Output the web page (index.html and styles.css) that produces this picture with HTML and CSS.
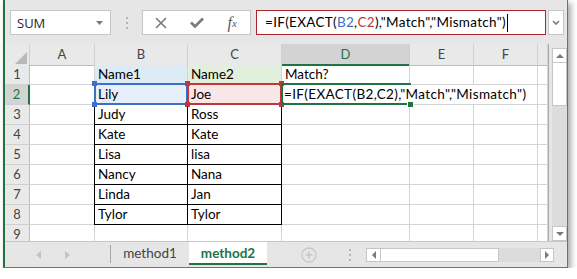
FILE: index.html
```html
<!DOCTYPE html>
<html lang="en">
<head>
    <meta charset="UTF-8" />
    <meta name="viewport" content="width=device-width, initial-scale=1.0" />
    <title>EXACT compare - method2</title>
    <link rel="stylesheet" href="styles.css">
</head>
<body>
    <div class="window">
        <div class="toolbar">
            <div class="namebox">
                <span>SUM</span>
                <svg width="7" height="4" viewBox="0 0 7 4"><path d="M0 0h7L3.5 4z" fill="#7a7a7a"/></svg>
            </div>
            <div class="grip">
                <svg width="2" height="12" viewBox="0 0 2 12"><rect y="0" width="2" height="2"/><rect y="5" width="2" height="2"/><rect y="10" width="2" height="2"/></svg>
            </div>
            <div class="fxbox">
                <span class="fxbtn">
                    <svg width="12" height="12" viewBox="0 0 12 12"><path d="M1 1l10 10M11 1L1 11" stroke="#7a7a7a" stroke-width="1.6" fill="none"/></svg>
                </span>
                <span class="fxbtn">
                    <svg width="14" height="11" viewBox="0 0 14 11"><path d="M1 5.5l4 4L13 1.5" stroke="#7a7a7a" stroke-width="2.6" fill="none"/></svg>
                </span>
                <span class="fxbtn fx"><i>f</i><sub>x</sub></span>
            </div>
            <div class="formula">=IF(EXACT(<span class="ref-b">B2</span>,<span class="ref-c">C2</span>),"Match","Mismatch")<span class="cursor"></span></div>
            <div class="expand">
                <svg width="8" height="5" viewBox="0 0 8 5"><path d="M1 1l3 3 3-3" stroke="#7a7a7a" stroke-width="1.6" fill="none"/></svg>
            </div>
        </div>

        <div class="sheet">
            <div class="grid">
                <div class="row head">
                    <div class="c hd corner"><svg width="12" height="12" viewBox="0 0 12 12"><path d="M12 0v12H0z" fill="#b9b9b9"/></svg></div>
                    <div class="c hd">A</div>
                    <div class="c hd">B</div>
                    <div class="c hd">C</div>
                    <div class="c hd on">D</div>
                    <div class="c hd">E</div>
                    <div class="c hd">F</div>
                    <div class="c hd"></div>
                </div>
                <div class="row">
                    <div class="c rh">1</div>
                    <div class="c"></div>
                    <div class="c fill-b">Name1</div>
                    <div class="c fill-c">Name2</div>
                    <div class="c">Match?</div>
                    <div class="c"></div>
                    <div class="c"></div>
                    <div class="c"></div>
                </div>
                <div class="row">
                    <div class="c rh on">2</div>
                    <div class="c"></div>
                    <div class="c sel sel-b">Lily<i class="h tl"></i><i class="h tr"></i><i class="h bl"></i><i class="h br"></i></div>
                    <div class="c sel sel-c">Joe<i class="h tl"></i><i class="h tr"></i><i class="h bl"></i><i class="h br"></i></div>
                    <div class="c sel active"><span class="edit">=IF(EXACT(B2,C2),"Match","Mismatch")</span><i class="h br"></i></div>
                    <div class="c spill"></div>
                    <div class="c"></div>
                    <div class="c"></div>
                </div>
                <div class="row">
                    <div class="c rh">3</div>
                    <div class="c"></div>
                    <div class="c tb first">Judy</div>
                    <div class="c tb">Ross</div>
                    <div class="c"></div><div class="c"></div><div class="c"></div><div class="c"></div>
                </div>
                <div class="row">
                    <div class="c rh">4</div>
                    <div class="c"></div>
                    <div class="c tb first">Kate</div>
                    <div class="c tb">Kate</div>
                    <div class="c"></div><div class="c"></div><div class="c"></div><div class="c"></div>
                </div>
                <div class="row">
                    <div class="c rh">5</div>
                    <div class="c"></div>
                    <div class="c tb first">Lisa</div>
                    <div class="c tb">lisa</div>
                    <div class="c"></div><div class="c"></div><div class="c"></div><div class="c"></div>
                </div>
                <div class="row">
                    <div class="c rh">6</div>
                    <div class="c"></div>
                    <div class="c tb first">Nancy</div>
                    <div class="c tb">Nana</div>
                    <div class="c"></div><div class="c"></div><div class="c"></div><div class="c"></div>
                </div>
                <div class="row">
                    <div class="c rh">7</div>
                    <div class="c"></div>
                    <div class="c tb first">Linda</div>
                    <div class="c tb">Jan</div>
                    <div class="c"></div><div class="c"></div><div class="c"></div><div class="c"></div>
                </div>
                <div class="row">
                    <div class="c rh">8</div>
                    <div class="c"></div>
                    <div class="c tb first">Tylor</div>
                    <div class="c tb">Tylor</div>
                    <div class="c"></div><div class="c"></div><div class="c"></div><div class="c"></div>
                </div>
                <div class="row">
                    <div class="c rh">9</div>
                    <div class="c"></div>
                    <div class="c"></div>
                    <div class="c"></div>
                    <div class="c"></div><div class="c"></div><div class="c"></div><div class="c"></div>
                </div>
            </div>
            <div class="vscroll">
                <div class="sbtn up"><svg width="8" height="4" viewBox="0 0 8 4"><path d="M0 4h8L4 0z" fill="#7a7a7a"/></svg></div>
                <div class="vthumb"></div>
                <div class="vtrack"></div>
                <div class="sbtn down"><svg width="8" height="4" viewBox="0 0 8 4"><path d="M0 0h8L4 4z" fill="#7a7a7a"/></svg></div>
            </div>
        </div>

        <div class="tabbar">
            <div class="nav">
                <svg width="5" height="8" viewBox="0 0 5 8"><path d="M5 0v8L0 4z" fill="#c3c3c3"/></svg>
                <svg width="5" height="8" viewBox="0 0 5 8"><path d="M0 0v8l5-4z" fill="#c3c3c3"/></svg>
            </div>
            <div class="divider"></div>
            <div class="tab">method1</div>
            <div class="tab current">method2</div>
            <div class="addsheet">
                <svg width="16" height="16" viewBox="0 0 16 16"><circle cx="8" cy="8" r="7" stroke="#c8c8c8" stroke-width="1.3" fill="none"/><path d="M8 4.5v7M4.5 8h7" stroke="#c8c8c8" stroke-width="1.6"/></svg>
            </div>
            <div class="dots">
                <svg width="2" height="12" viewBox="0 0 2 12"><rect y="0" width="2" height="2"/><rect y="5" width="2" height="2"/><rect y="10" width="2" height="2"/></svg>
            </div>
            <div class="hscroll">
                <div class="sbtn left"><svg width="4" height="8" viewBox="0 0 4 8"><path d="M4 0v8L0 4z" fill="#7a7a7a"/></svg></div>
                <div class="hthumb"></div>
                <div class="htrack"></div>
                <div class="sbtn right"><svg width="4" height="8" viewBox="0 0 4 8"><path d="M0 0v8l4-4z" fill="#7a7a7a"/></svg></div>
            </div>
        </div>
    </div>
</body>
</html>
```

FILE: styles.css
```css
* {
    box-sizing: border-box;
}
body {
    margin: 0;
    background: #fff;
    font-family: Lato, "Open Sans", sans-serif;
    color: #000;
}
.window {
    margin-left: 3px;
    width: 565px;
    height: 268px;
    background: #e6e6e6;
    border-left: 2px solid #217346;
    border-right: 1px solid #707070;
    border-bottom: 1px solid #707070;
    box-shadow: 3px 3px 6px rgba(0,0,0,0.35);
    overflow: hidden;
}

/* formula bar */
.toolbar {
    display: flex;
    height: 44px;
    padding: 10px 0 0 5px;
}
.namebox {
    width: 101px;
    height: 25px;
    background: #fff;
    border: 1px solid #c6c6c6;
    display: flex;
    align-items: center;
    justify-content: space-between;
    padding: 0 7px 0 6px;
    font-family: "Open Sans", sans-serif;
    font-size: 13px;
    color: #262626;
}
.grip, .dots {
    display: flex;
    align-items: center;
    justify-content: center;
    fill: #b4b4b4;
}
.grip {
    width: 31px;
    height: 25px;
}
.fxbox {
    width: 109px;
    height: 25px;
    background: #fff;
    border: 1px solid #c6c6c6;
    display: flex;
}
.fxbtn {
    width: 36px;
    display: flex;
    align-items: center;
    justify-content: center;
}
.fx {
    font-family: "Liberation Serif", serif;
    color: #5a5a5a;
    font-size: 16px;
    font-style: italic;
}
.fx sub {
    font-size: 11px;
    vertical-align: -2px;
}
.formula {
    width: 290px;
    height: 25px;
    margin-left: 5px;
    background: #fff;
    border: 1px solid #a8252b;
    padding-left: 8px;
    font-size: 13.5px;
    letter-spacing: 0.3px;
    line-height: 23px;
    white-space: nowrap;
    display: flex;
    align-items: center;
}
.ref-b {
    color: #3a6fc6;
}
.ref-c {
    color: #c0373a;
}
.cursor {
    width: 1px;
    height: 18px;
    background: #000;
    margin-left: 1px;
}
.expand {
    width: 16px;
    height: 25px;
    margin-left: 2px;
    background: #fff;
    border: 1px solid #c6c6c6;
    display: flex;
    align-items: center;
    justify-content: center;
}

/* grid */
.sheet {
    display: flex;
    height: 197px;
    overflow: hidden;
}
.grid {
    width: 543px;
    background: #fff;
}
.row {
    display: grid;
    grid-template-columns: 25px 65px 93px 94px 128px 64px 64px 10px;
    height: 20px;
}
.row.head {
    height: 21px;
}
.c {
    border-right: 1px solid #d4d4d4;
    border-bottom: 1px solid #d4d4d4;
    font-size: 13.5px;
    line-height: 19px;
    padding: 0 3px;
    white-space: nowrap;
}
.hd, .rh {
    background: #e9e9e9;
    color: #444;
    text-align: center;
    padding: 0;
}
.hd {
    font-size: 13px;
    line-height: 20px;
    border-right-color: #d0d0d0;
    border-bottom-color: #bdbdbd;
}
.rh {
    font-size: 13px;
    border-right-color: #bdbdbd;
    border-bottom-color: #d0d0d0;
}
.hd.on {
    background: #d3d3d3;
    color: #217346;
    border-bottom: 2px solid #217346;
}
.rh.on {
    background: #d3d3d3;
    color: #217346;
    border-right: 2px solid #217346;
}
.corner {
    display: flex;
    align-items: flex-end;
    justify-content: flex-end;
    padding: 0 2px 1px 0;
}
.fill-b {
    background: #ddebf7;
}
.fill-c {
    background: #e2efda;
}
.tb {
    border-right-color: #000;
    border-bottom-color: #000;
}
.tb.first {
    box-shadow: -1px 0 0 #000;
}

/* reference and active cell marks */
.sel {
    position: relative;
}
.sel::before {
    content: "";
    position: absolute;
    top: -2px;
    left: -1px;
    right: -1px;
    bottom: -1px;
    border: 2px solid;
}
.sel-b {
    background: #e6eef9;
}
.sel-b::before, .sel-b .h {
    border-color: #3c6fc8;
    background: #3c6fc8;
}
.sel-b::before {
    background: none;
}
.sel-c {
    background: #f9e6e6;
}
.sel-c::before, .sel-c .h {
    border-color: #c0373a;
    background: #c0373a;
}
.sel-c::before {
    background: none;
}
.active {
    border-right: none;
    padding-left: 2px;
}
.active::before {
    border-color: #217346;
    border-right-width: 0;
}
.edit {
    position: relative;
    z-index: 1;
    letter-spacing: 0.35px;
}
.spill {
    border-right: none;
}
.h {
    position: absolute;
    width: 5px;
    height: 5px;
}
.h.tl { top: -4px; left: -3px; }
.h.tr { top: -4px; right: -3px; }
.h.bl { bottom: -3px; left: -3px; }
.h.br { bottom: -3px; right: -3px; }
.active .h {
    background: #217346;
    border: 1px solid #fff;
    width: 7px;
    height: 7px;
    bottom: -4px;
    right: -4px;
}

/* scroll bars */
.vscroll {
    width: 19px;
    border-left: 1px solid #a9a9a9;
    padding: 4px 0 0 3px;
    display: flex;
    flex-direction: column;
}
.sbtn {
    width: 15px;
    height: 15px;
    background: #fff;
    border: 1px solid #c6c6c6;
    display: flex;
    align-items: center;
    justify-content: center;
    flex-shrink: 0;
}
.vthumb {
    height: 43px;
    background: #fff;
    border: 1px solid #c6c6c6;
    border-top: none;
}
.vtrack {
    flex: 1;
    background: #dcdcdc;
}

/* sheet tabs */
.tabbar {
    display: flex;
    height: 26px;
    border-top: 1px solid #c6c6c6;
    padding-left: 5px;
}
.nav {
    width: 100px;
    display: flex;
    align-items: center;
    gap: 24px;
    padding-left: 26px;
}
.divider {
    width: 1px;
    height: 18px;
    margin-top: 3px;
    background: #a6a6a6;
}
.tab {
    width: 78px;
    height: 23px;
    text-align: center;
    font-size: 13.5px;
    line-height: 23px;
    color: #444;
}
.tab.current {
    background: #fff;
    color: #217346;
    font-weight: bold;
    border-bottom: 2px solid #217346;
    line-height: 22px;
}
.addsheet {
    margin-left: 34px;
    width: 16px;
    display: flex;
    align-items: center;
}
.dots {
    margin-left: 27px;
    width: 12px;
}
.hscroll {
    margin-left: 10px;
    width: 188px;
    height: 14px;
    margin-top: 6px;
    display: flex;
}
.hscroll .sbtn {
    width: 15px;
    height: 14px;
}
.hscroll .right {
    width: 14px;
}
.hthumb {
    width: 118px;
    background: #fff;
    border: 1px solid #c6c6c6;
    border-left: none;
}
.htrack {
    width: 41px;
    background: #dcdcdc;
}
```
